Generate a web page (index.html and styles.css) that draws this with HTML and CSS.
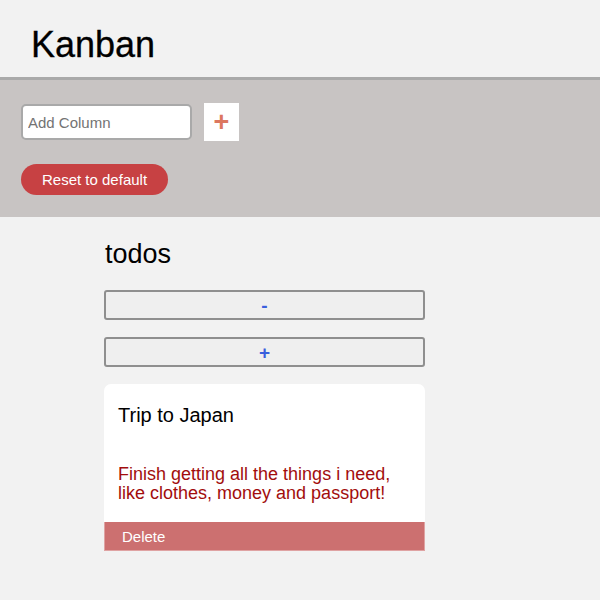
FILE: index.html
```html
<!DOCTYPE html>
<html lang="en">
<head>
<meta charset="utf-8">
<title>Kanban</title>
<link rel="stylesheet" href="styles.css">
</head>
<body>
<header class="header">
  <h1 class="title">Kanban</h1>
</header>
<section class="controls">
  <div class="add-row">
    <input class="add-input" type="text" placeholder="Add Column">
    <button class="add-btn" type="button">+</button>
  </div>
  <button class="reset-btn" type="button">Reset to default</button>
</section>
<main class="board">
  <div class="column">
    <h2 class="col-title">todos</h2>
    <button class="col-btn" type="button">-</button>
    <button class="col-btn" type="button">+</button>
    <div class="card">
      <div class="card-body">
        <h3 class="card-title">Trip to Japan</h3>
        <p class="card-desc">Finish getting all the things i need, like clothes, money and passport!</p>
      </div>
      <button class="delete-btn" type="button">Delete</button>
    </div>
  </div>
</main>
</body>
</html>
```
FILE: styles.css
```css
* { box-sizing: border-box; }
html, body {
  margin: 0;
  padding: 0;
  background: #f2f2f2;
  font-family: "Liberation Sans", Arial, sans-serif;
  color: #000;
}
.header {
  height: 80px;
  padding: 24px 0 0 31px;
  border-bottom: 3px solid #aaaaaa;
}
.title {
  margin: 0;
  font-size: 36px;
  font-weight: 400;
  line-height: 41px;
  -webkit-text-stroke: 0.3px #000;
}
.controls {
  background: #c8c4c3;
  padding: 23px 21px 22px;
  display: flex;
  flex-direction: column;
  align-items: flex-start;
  gap: 23px;
}
.add-row {
  display: flex;
  align-items: center;
  gap: 12px;
}
.add-input {
  width: 171px;
  height: 36px;
  border: 2px solid #a9a9a9;
  border-radius: 5px;
  padding: 0 5px;
  font-family: inherit;
  font-size: 15px;
  background: #fff;
  outline: none;
}
.add-input::placeholder { color: #737373; }
.add-btn {
  width: 35px;
  height: 38px;
  border: none;
  background: #fff;
  color: #dc775f;
  font-family: inherit;
  font-size: 27px;
  font-weight: 700;
  line-height: 38px;
  padding: 0;
}
.reset-btn {
  height: 31px;
  padding: 0 21px;
  border: none;
  border-radius: 16px;
  background: #c74143;
  color: #fff;
  font-family: inherit;
  font-size: 15px;
}
.board {
  padding: 22px 0 40px 104px;
}
.column {
  width: 321px;
  display: flex;
  flex-direction: column;
}
.col-title {
  margin: 0 0 20px 1px;
  font-size: 27px;
  font-weight: 400;
  line-height: 31px;
}
.col-btn {
  height: 30px;
  margin-bottom: 17px;
  background: #efefef;
  border: 2px solid #8f8f8f;
  border-radius: 3px;
  color: #3a60dd;
  font-family: inherit;
  font-size: 19px;
  font-weight: 700;
  line-height: 1;
  padding: 0;
}
.card {
  background: #fff;
  border-radius: 7px 7px 0 0;
  overflow: hidden;
}
.card-body {
  padding: 20px 14px 19px;
}
.card-title {
  margin: 0 0 38px;
  font-size: 20px;
  font-weight: 400;
  line-height: 23px;
}
.card-desc {
  margin: 0;
  color: #a20d0d;
  font-size: 18px;
  line-height: 19px;
}
.delete-btn {
  display: block;
  width: 100%;
  height: 29px;
  border: 1px solid #dfa3a3;
  border-top: none;
  background: #cc7070;
  color: #fff;
  font-family: inherit;
  font-size: 15px;
  text-align: left;
  padding: 0 0 0 17px;
}
```
